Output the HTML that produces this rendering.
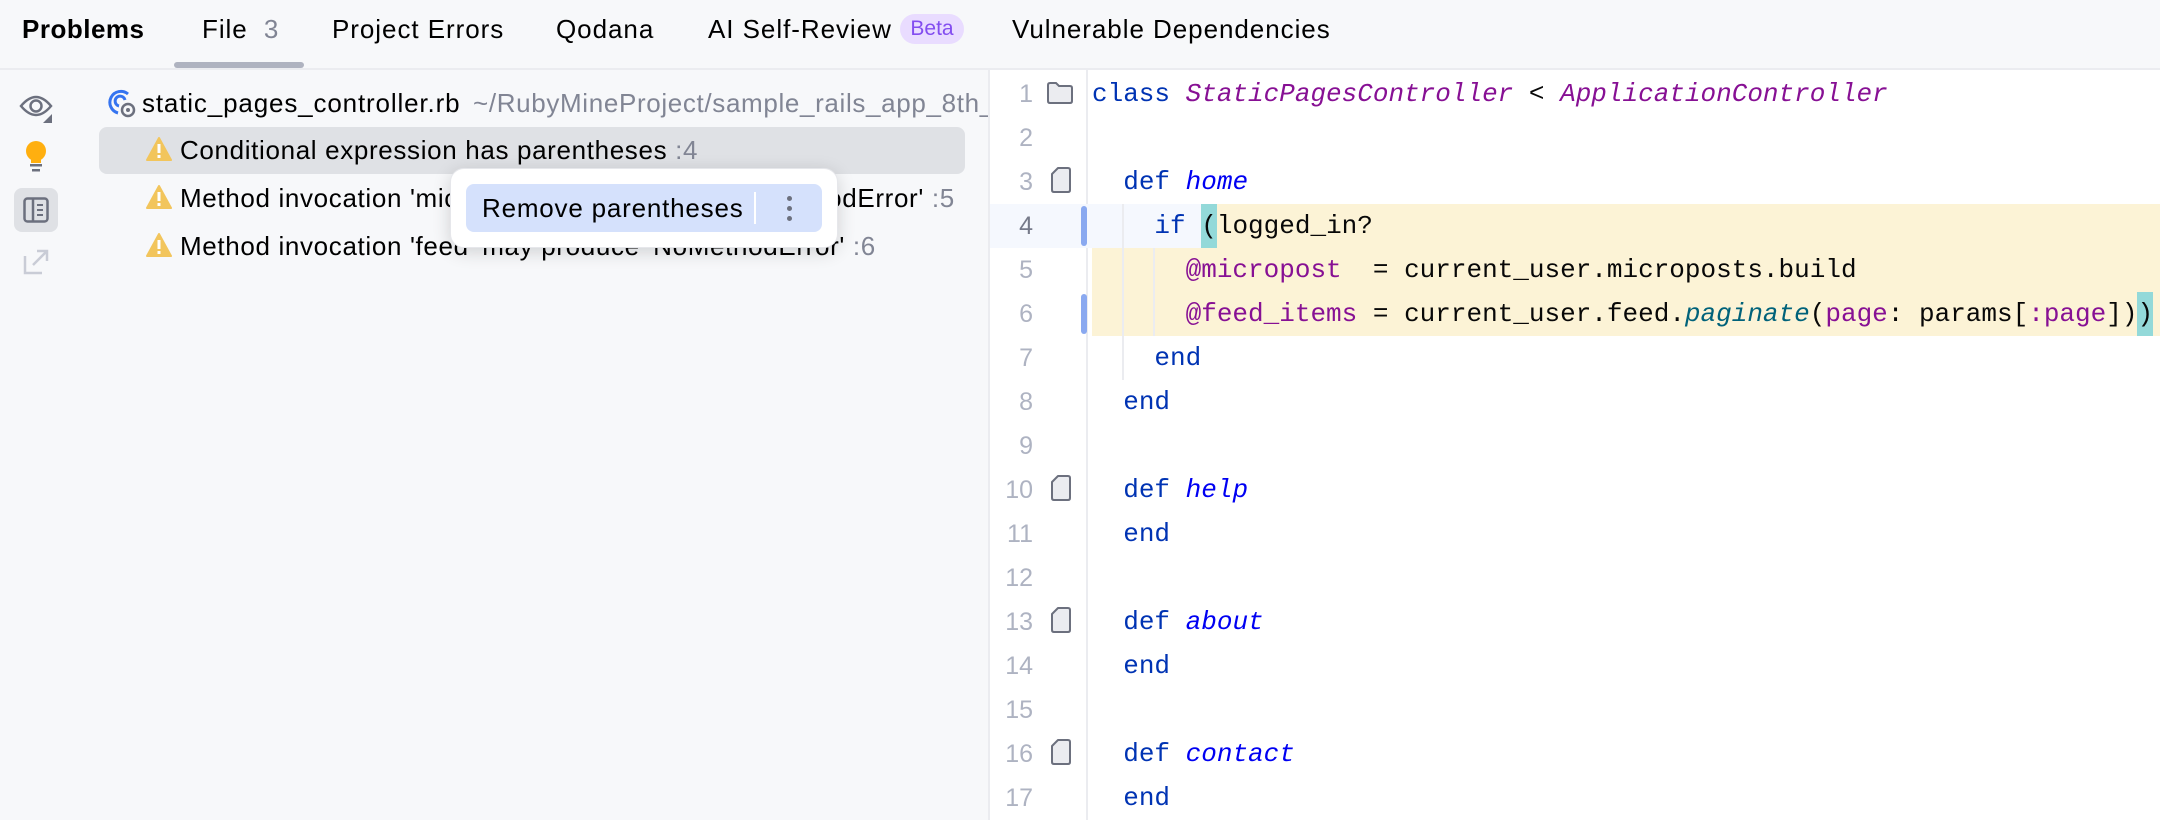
<!DOCTYPE html>
<html><head><meta charset="utf-8"><style>
*{margin:0;padding:0;box-sizing:border-box}
body{width:2160px;height:820px;overflow:hidden;background:#f7f8fa;font-family:"Liberation Sans",sans-serif;position:relative;color:#000}
.a{position:absolute;white-space:pre}
.ui{font-size:26px;line-height:30px;letter-spacing:0.65px}
.tab{position:absolute;top:14px;font-size:26px;line-height:30px;letter-spacing:0.95px}
.code{position:absolute;left:1092px;font-family:"Liberation Mono",monospace;font-size:26px;line-height:44px;height:44px;white-space:pre;color:#080808}
.ln{position:absolute;left:990px;width:43px;text-align:right;font-family:"Liberation Sans",sans-serif;font-size:25px;line-height:44px;color:#aeb3c2}
.k{color:#0033b3}.m{color:#0000f2;font-style:italic}.c{color:#871094;font-style:italic}.v{color:#871094}.f{color:#00627a;font-style:italic}
.g{color:#818594}
</style></head><body>
<div class="tab" style="left:22px;font-weight:bold;letter-spacing:0.5px">Problems</div>
<div class="tab" style="left:202px">File <span class="g" style="margin-left:8px">3</span></div>
<div style="position:absolute;left:174px;top:62px;width:130px;height:6px;background:#afb3c0;border-radius:3px"></div>
<div class="tab" style="left:332px">Project Errors</div>
<div class="tab" style="left:556px">Qodana</div>
<div class="tab" style="left:708px">AI Self-Review</div>
<div style="position:absolute;left:900px;top:14px;width:64px;height:30px;border-radius:15px;background:#e9dcff;color:#834df0;font-size:21px;line-height:30px;text-align:center">Beta</div>
<div class="tab" style="left:1012px">Vulnerable Dependencies</div>
<div style="position:absolute;left:0;top:68px;width:2160px;height:2px;background:#ebecf0"></div>
<svg class="a" style="left:18px;top:90px" width="40" height="36" viewBox="0 0 40 36"><path d="M3 16 Q18 -2 33 16 Q18 34 3 16Z" fill="none" stroke="#6c707e" stroke-width="2.5"/><circle cx="18" cy="16" r="5.5" fill="none" stroke="#6c707e" stroke-width="2.5"/><path d="M34 24 L34 33 L25 33Z" fill="#6c707e"/></svg>
<svg class="a" style="left:24px;top:140px" width="24" height="34" viewBox="0 0 24 34"><circle cx="12" cy="11" r="10" fill="#ffaf0f"/><rect x="7" y="15" width="10" height="8" fill="#ffaf0f"/><rect x="6" y="24" width="12" height="2.5" fill="#6c707e"/><rect x="8" y="29" width="8" height="2.5" fill="#6c707e"/></svg>
<div style="position:absolute;left:14px;top:188px;width:44px;height:44px;border-radius:8px;background:#dfe1e5"></div>
<svg class="a" style="left:23px;top:197px" width="26" height="26" viewBox="0 0 26 26"><rect x="1.5" y="1.5" width="23" height="23" rx="3" fill="none" stroke="#6c707e" stroke-width="2.5"/><line x1="10" y1="2" x2="10" y2="24" stroke="#6c707e" stroke-width="2.5"/><line x1="14" y1="8" x2="20" y2="8" stroke="#6c707e" stroke-width="2"/><line x1="14" y1="13" x2="20" y2="13" stroke="#6c707e" stroke-width="2"/><line x1="14" y1="18" x2="20" y2="18" stroke="#6c707e" stroke-width="2"/></svg>
<svg class="a" style="left:22px;top:248px" width="28" height="28" viewBox="0 0 28 28"><path d="M3 8 V25 H20" fill="none" stroke="#c9ccd6" stroke-width="2.5"/><path d="M11 17 L25 3 M15 3 H25 V13" fill="none" stroke="#c9ccd6" stroke-width="2.5"/></svg>
<svg class="a" style="left:106px;top:88px" width="32" height="32" viewBox="0 0 32 32"><path d="M22 6 A11 11 0 1 0 12 25" fill="none" stroke="#3574f0" stroke-width="3"/><path d="M19 12 A5 5 0 1 0 13 18" fill="none" stroke="#3574f0" stroke-width="3"/><circle cx="22" cy="22" r="6" fill="none" stroke="#6c707e" stroke-width="2.5"/><circle cx="22" cy="22" r="2" fill="#6c707e"/></svg>
<div class="a ui" style="left:142px;top:88px;letter-spacing:0.85px">static_pages_controller.rb</div>
<div class="a ui g" style="left:473px;top:88px">~/RubyMineProject/sample_rails_app_8th_</div>
<div style="position:absolute;left:99px;top:127px;width:866px;height:47px;border-radius:8px;background:#dfe1e5"></div>
<svg class="a" style="left:146px;top:136px" width="26" height="26" viewBox="0 0 26 26"><path d="M13 2 L25 24 H1Z" fill="#f2c55c" stroke="#f2c55c" stroke-width="2" stroke-linejoin="round"/><rect x="11.5" y="8" width="3" height="9" fill="#fff"/><rect x="11.5" y="19" width="3" height="3" fill="#fff"/></svg>
<div class="a ui" style="left:180px;top:135px">Conditional expression has parentheses <span class="g">:4</span></div>
<svg class="a" style="left:146px;top:184px" width="26" height="26" viewBox="0 0 26 26"><path d="M13 2 L25 24 H1Z" fill="#f2c55c" stroke="#f2c55c" stroke-width="2" stroke-linejoin="round"/><rect x="11.5" y="8" width="3" height="9" fill="#fff"/><rect x="11.5" y="19" width="3" height="3" fill="#fff"/></svg>
<div class="a ui" style="left:180px;top:183px">Method invocation 'microposts' may produce 'NoMethodError' <span class="g">:5</span></div>
<svg class="a" style="left:146px;top:232px" width="26" height="26" viewBox="0 0 26 26"><path d="M13 2 L25 24 H1Z" fill="#f2c55c" stroke="#f2c55c" stroke-width="2" stroke-linejoin="round"/><rect x="11.5" y="8" width="3" height="9" fill="#fff"/><rect x="11.5" y="19" width="3" height="3" fill="#fff"/></svg>
<div class="a ui" style="left:180px;top:231px">Method invocation 'feed' may produce 'NoMethodError' <span class="g">:6</span></div>
<div style="position:absolute;left:450px;top:168px;width:388px;height:80px;background:#fff;border-radius:14px;box-shadow:0 4px 18px rgba(0,0,0,0.16);border:1px solid #e6e7eb"></div>
<div style="position:absolute;left:466px;top:184px;width:356px;height:48px;background:#d5e1fc;border-radius:8px"></div>
<div class="a ui" style="left:482px;top:193px;letter-spacing:0.8px">Remove parentheses</div>
<div style="position:absolute;left:754px;top:192px;width:2px;height:32px;background:#fff"></div>
<div style="position:absolute;left:787px;top:196px;width:5px;height:5px;border-radius:3px;background:#6c707e"></div>
<div style="position:absolute;left:787px;top:206px;width:5px;height:5px;border-radius:3px;background:#6c707e"></div>
<div style="position:absolute;left:787px;top:216px;width:5px;height:5px;border-radius:3px;background:#6c707e"></div>
<div style="position:absolute;left:988px;top:70px;width:2px;height:750px;background:#ebecf0"></div>
<div style="position:absolute;left:990px;top:70px;width:1170px;height:750px;background:#fff"></div>
<div style="position:absolute;left:1086px;top:70px;width:2px;height:750px;background:#ebecf0"></div>
<div style="position:absolute;left:990px;top:204px;width:211px;height:44px;background:#f5f8fe"></div>
<div style="position:absolute;left:1217px;top:204px;width:943px;height:44px;background:#fcf3d6"></div>
<div style="position:absolute;left:1092px;top:248px;width:1068px;height:88px;background:#fcf3d6"></div>
<div style="position:absolute;left:1201px;top:204px;width:16px;height:44px;background:#93d9d9"></div>
<div style="position:absolute;left:2137px;top:292px;width:16px;height:44px;background:#93d9d9"></div>
<div style="position:absolute;left:1081px;top:206px;width:6px;height:40px;border-radius:3px;background:#8aa9f0"></div>
<div style="position:absolute;left:1081px;top:294px;width:6px;height:40px;border-radius:3px;background:#8aa9f0"></div>
<div style="position:absolute;left:1122px;top:204px;width:2px;height:176px;background:#ebecf0"></div>
<div style="position:absolute;left:1153px;top:248px;width:2px;height:88px;background:#ebecf0"></div>
<svg class="a" style="left:1046px;top:81px" width="28" height="24" viewBox="0 0 28 24"><path d="M2 4 Q2 2 4 2 H10 L13 5 H24 Q26 5 26 7 V20 Q26 22 24 22 H4 Q2 22 2 20Z" fill="#ebecf0" stroke="#6c707e" stroke-width="2"/></svg>
<svg class="a" style="left:1050px;top:166px" width="22" height="28" viewBox="0 0 22 28"><path d="M8 2 H18 Q20 2 20 4 V24 Q20 26 18 26 H4 Q2 26 2 24 V8Z" fill="#ebecf0" stroke="#6c707e" stroke-width="2" stroke-linejoin="round"/></svg>
<svg class="a" style="left:1050px;top:474px" width="22" height="28" viewBox="0 0 22 28"><path d="M8 2 H18 Q20 2 20 4 V24 Q20 26 18 26 H4 Q2 26 2 24 V8Z" fill="#ebecf0" stroke="#6c707e" stroke-width="2" stroke-linejoin="round"/></svg>
<svg class="a" style="left:1050px;top:606px" width="22" height="28" viewBox="0 0 22 28"><path d="M8 2 H18 Q20 2 20 4 V24 Q20 26 18 26 H4 Q2 26 2 24 V8Z" fill="#ebecf0" stroke="#6c707e" stroke-width="2" stroke-linejoin="round"/></svg>
<svg class="a" style="left:1050px;top:738px" width="22" height="28" viewBox="0 0 22 28"><path d="M8 2 H18 Q20 2 20 4 V24 Q20 26 18 26 H4 Q2 26 2 24 V8Z" fill="#ebecf0" stroke="#6c707e" stroke-width="2" stroke-linejoin="round"/></svg>
<div class="ln" style="top:72px">1</div><div class="ln" style="top:116px">2</div><div class="ln" style="top:160px">3</div><div class="ln" style="top:204px;color:#767a8a">4</div><div class="ln" style="top:248px">5</div><div class="ln" style="top:292px">6</div><div class="ln" style="top:336px">7</div><div class="ln" style="top:380px">8</div><div class="ln" style="top:424px">9</div><div class="ln" style="top:468px">10</div><div class="ln" style="top:512px">11</div><div class="ln" style="top:556px">12</div><div class="ln" style="top:600px">13</div><div class="ln" style="top:644px">14</div><div class="ln" style="top:688px">15</div><div class="ln" style="top:732px">16</div><div class="ln" style="top:776px">17</div>
<div class="code" style="top:72px"><span class="k">class</span> <span class="c">StaticPagesController</span> &lt; <span class="c">ApplicationController</span></div>
<div class="code" style="top:160px">  <span class="k">def</span> <span class="m">home</span></div>
<div class="code" style="top:204px">    <span class="k">if</span> (logged_in?</div>
<div class="code" style="top:248px">      <span class="v">@micropost</span>  = current_user.microposts.build</div>
<div class="code" style="top:292px">      <span class="v">@feed_items</span> = current_user.feed.<span class="f">paginate</span>(<span class="v">page</span>: params[<span class="v">:page</span>]))</div>
<div class="code" style="top:336px">    <span class="k">end</span></div>
<div class="code" style="top:380px">  <span class="k">end</span></div>
<div class="code" style="top:468px">  <span class="k">def</span> <span class="m">help</span></div>
<div class="code" style="top:512px">  <span class="k">end</span></div>
<div class="code" style="top:600px">  <span class="k">def</span> <span class="m">about</span></div>
<div class="code" style="top:644px">  <span class="k">end</span></div>
<div class="code" style="top:732px">  <span class="k">def</span> <span class="m">contact</span></div>
<div class="code" style="top:776px">  <span class="k">end</span></div>
</body></html>
